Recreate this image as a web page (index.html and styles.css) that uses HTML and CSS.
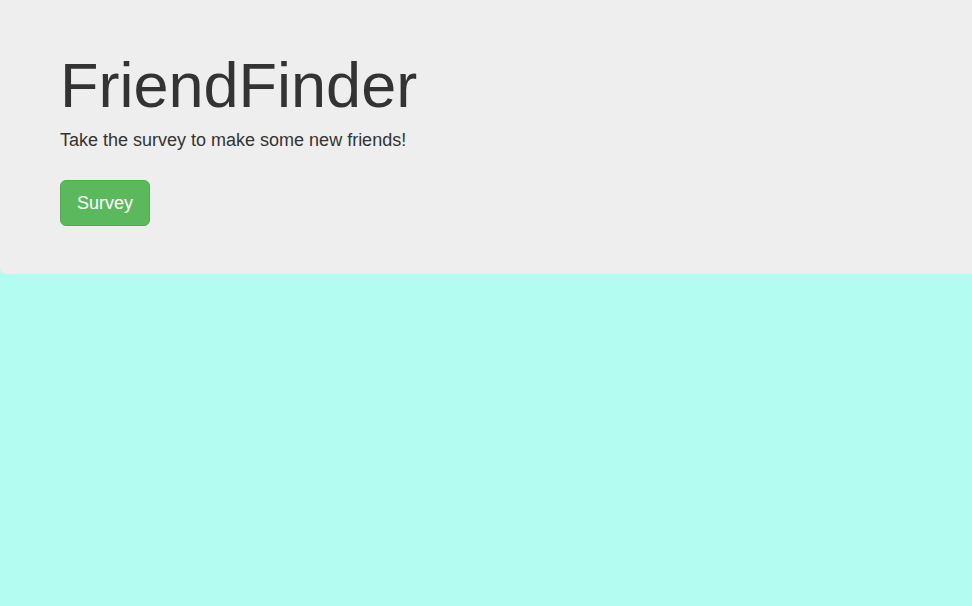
FILE: index.html
```html
<!DOCTYPE html>
<html lang="en">
<head>
<meta charset="utf-8">
<title>FriendFinder</title>
<link rel="stylesheet" href="styles.css">
</head>
<body>
<div class="jumbotron">
  <h1 class="title">FriendFinder</h1>
  <p class="lead">Take the survey to make some new friends!</p>
  <a class="btn-survey" href="#">Survey</a>
</div>
</body>
</html>
```
FILE: styles.css
```css
html, body {
  margin: 0;
  padding: 0;
}
body {
  background: #b3fcf1;
  font-family: "Liberation Sans", Arial, Helvetica, sans-serif;
  color: #333333;
  min-height: 606px;
}
.jumbotron {
  background: #eeeeee;
  padding: 51px 60px 48px;
  border-radius: 0 0 0 6px;
  display: flex;
  flex-direction: column;
  align-items: flex-start;
}
.title {
  margin: 0 0 10px;
  font-size: 63px;
  font-weight: 500;
  line-height: 1.1;
  color: #333333;
}
.lead {
  margin: 0 0 30px;
  font-size: 18px;
  line-height: 20px;
}
.btn-survey {
  display: inline-block;
  box-sizing: border-box;
  height: 46px;
  padding: 10px 16px;
  font-size: 18px;
  line-height: 24px;
  color: #ffffff;
  background: #5cb85c;
  border: 1px solid #4cae4c;
  border-radius: 6px;
  text-decoration: none;
}
```
